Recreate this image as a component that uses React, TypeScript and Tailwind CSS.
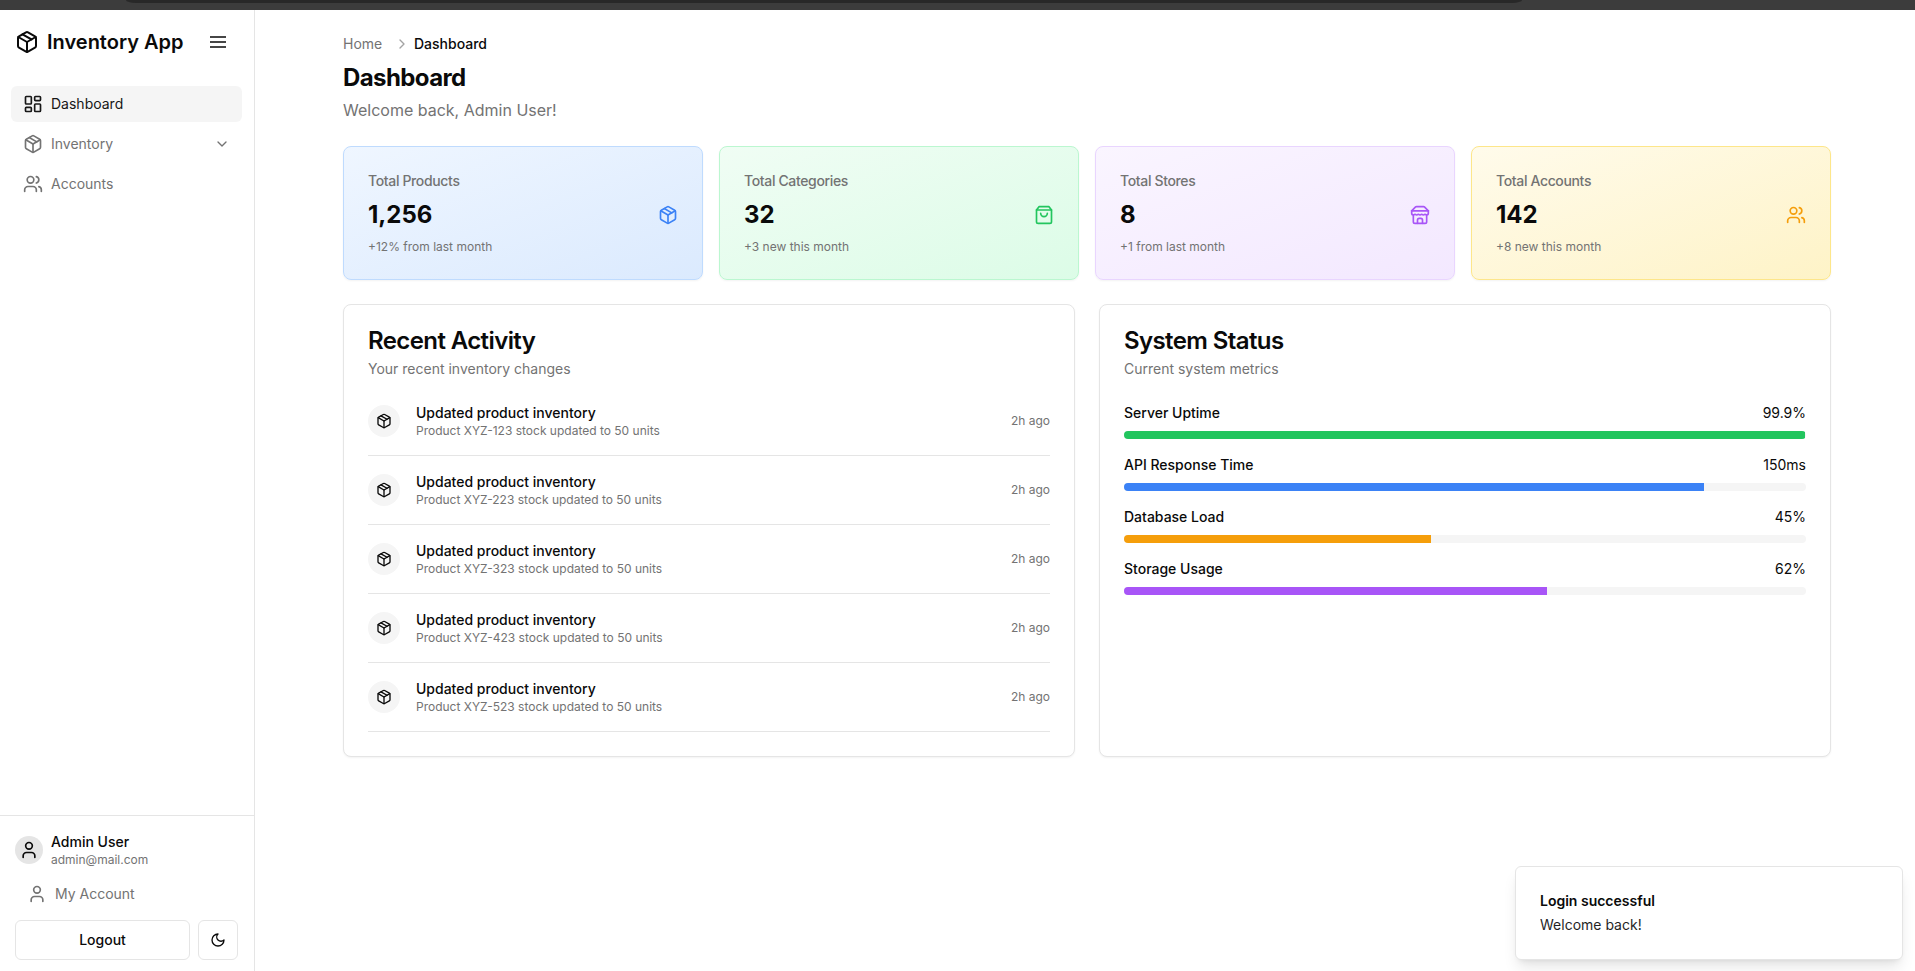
import type { ReactNode } from "react";
import { ChevronDown, ChevronRight, LayoutDashboard, Package, User, Users } from "lucide-react";

function Icon({ className, children }: { className?: string; children: ReactNode }) {
  return (
    <svg
      viewBox="0 0 24 24"
      fill="none"
      stroke="currentColor"
      strokeWidth="2"
      strokeLinecap="round"
      strokeLinejoin="round"
      className={className}
    >
      {children}
    </svg>
  );
}

const Menu = ({ className }: { className?: string }) => (
  <Icon className={className}>
    <path strokeLinecap="butt" d="M2.4 12h19.2M2.4 6h19.2M2.4 18h19.2" />
  </Icon>
);

const Moon = ({ className }: { className?: string }) => (
  <Icon className={className}>
    <path d="M12 3a6 6 0 0 0 9 9 9 9 0 1 1-9-9Z" />
  </Icon>
);

const ShoppingBag = ({ className }: { className?: string }) => (
  <Icon className={className}>
    <path d="M6 2 3 6v14a2 2 0 0 0 2 2h14a2 2 0 0 0 2-2V6l-3-4Z" />
    <path d="M3 6h18" />
    <path d="M16 10a4 4 0 0 1-8 0" />
  </Icon>
);

const Store = ({ className }: { className?: string }) => (
  <Icon className={className}>
    <path d="m2 7 4.41-4.41A2 2 0 0 1 7.83 2h8.34a2 2 0 0 1 1.42.59L22 7" />
    <path d="M4 12v8a2 2 0 0 0 2 2h12a2 2 0 0 0 2-2v-8" />
    <path d="M15 22v-4a2 2 0 0 0-2-2h-2a2 2 0 0 0-2 2v4" />
    <path d="M2 7h20" />
    <path d="M22 7v3a2 2 0 0 1-2 2a2.7 2.7 0 0 1-1.59-.63.7.7 0 0 0-.82 0A2.7 2.7 0 0 1 16 12a2.7 2.7 0 0 1-1.59-.63.7.7 0 0 0-.82 0A2.7 2.7 0 0 1 12 12a2.7 2.7 0 0 1-1.59-.63.7.7 0 0 0-.82 0A2.7 2.7 0 0 1 8 12a2.7 2.7 0 0 1-1.59-.63.7.7 0 0 0-.82 0A2.7 2.7 0 0 1 4 12a2 2 0 0 1-2-2V7" />
  </Icon>
);

const stats = [
  {
    label: "Total Products",
    value: "1,256",
    note: "+12% from last month",
    card: "border-[#bfdbfe] from-[#eff6ff] to-[#dbeafe]",
    icon: <Package className="size-5 text-[#3b82f6]" />,
  },
  {
    label: "Total Categories",
    value: "32",
    note: "+3 new this month",
    card: "border-[#bbf7d0] from-[#f0fdf4] to-[#dcfce7]",
    icon: <ShoppingBag className="size-5 text-[#22c55e]" />,
  },
  {
    label: "Total Stores",
    value: "8",
    note: "+1 from last month",
    card: "border-[#e9d5ff] from-[#faf5ff] to-[#f3e8ff]",
    icon: <Store className="size-5 text-[#a855f7]" />,
  },
  {
    label: "Total Accounts",
    value: "142",
    note: "+8 new this month",
    card: "border-[#fde68a] from-[#fffbeb] to-[#fef3c7]",
    icon: <Users className="size-5 text-[#f59e0b]" />,
  },
];

const activities = ["XYZ-123", "XYZ-223", "XYZ-323", "XYZ-423", "XYZ-523"];

const metrics = [
  { label: "Server Uptime", value: "99.9%", bar: "w-[99.9%] bg-[#22c55e]" },
  { label: "API Response Time", value: "150ms", bar: "w-[85%] bg-[#3b82f6]" },
  { label: "Database Load", value: "45%", bar: "w-[45%] bg-[#f59e0b]" },
  { label: "Storage Usage", value: "62%", bar: "w-[62%] bg-[#a855f7]" },
];

function Sidebar() {
  return (
    <aside className="flex w-[255px] shrink-0 flex-col border-r border-[#e5e5e5]">
      <div className="flex h-16 items-center justify-between pr-[26px] pl-[15px]">
        <div className="flex items-center gap-2">
          <Package className="size-6" />
          <span className="text-xl font-semibold">Inventory App</span>
        </div>
        <Menu className="size-5" />
      </div>
      <nav className="flex flex-1 flex-col gap-1 pt-3 pr-3 pl-[11px] text-sm text-[#737373]">
        <a className="flex h-9 items-center gap-2 rounded-md bg-[#f5f5f5] px-3 text-[#171717]">
          <LayoutDashboard className="size-5" />
          Dashboard
        </a>
        <a className="flex h-9 items-center gap-2 rounded-md px-3">
          <Package className="size-5" />
          <span className="flex-1">Inventory</span>
          <ChevronDown className="size-4" />
        </a>
        <a className="flex h-9 items-center gap-2 rounded-md px-3">
          <Users className="size-5" />
          Accounts
        </a>
      </nav>
      <div className="border-t border-[#e5e5e5] pt-4 pr-4 pb-[11px] pl-[15px]">
        <div className="flex items-center gap-2">
          <div className="flex size-7 items-center justify-center rounded-full bg-[#e5e5e5]">
            <User className="size-5" />
          </div>
          <div>
            <p className="text-sm font-medium">Admin User</p>
            <p className="text-xs text-[#737373]">admin@mail.com</p>
          </div>
        </div>
        <a className="mt-2 flex h-9 items-center gap-2 px-3 text-sm text-[#737373]">
          <User className="size-5" />
          My Account
        </a>
        <div className="mt-2 flex gap-2">
          <button className="h-10 flex-1 rounded-md border border-[#e5e5e5] text-sm font-medium">
            Logout
          </button>
          <button className="flex size-10 items-center justify-center rounded-md border border-[#e5e5e5]">
            <Moon className="size-4" />
          </button>
        </div>
      </div>
    </aside>
  );
}

function Panel({ title, subtitle, children }: { title: string; subtitle: string; children: ReactNode }) {
  return (
    <section className="rounded-lg border border-[#e5e5e5] bg-white p-6 shadow-[0_1px_2px_0_rgba(0,0,0,0.05)]">
      <h2 className="text-2xl leading-none font-semibold tracking-tight">{title}</h2>
      <p className="mt-1.5 mb-6 text-sm text-[#737373]">{subtitle}</p>
      <div className="flex flex-col gap-4">{children}</div>
    </section>
  );
}

export default function App() {
  return (
    <div className="relative flex h-[971px] w-[1915px] flex-col overflow-hidden bg-white font-['Inter',sans-serif] text-[#0a0a0a]">
      <div className="h-2.5 shrink-0 bg-[#3c3c3c] pl-[126px]">
        <div className="h-[3px] w-[1396px] rounded-b-[10px_3px] bg-[#282828]" />
      </div>
      <div className="flex min-h-0 flex-1">
        <Sidebar />
        <main className="flex-1 pt-6 pr-[84px] pl-[88px]">
          <div className="flex h-5 items-center text-sm">
            <span className="w-[51px] text-[#737373]">Home</span>
            <ChevronRight className="size-4 text-[#a3a3a3]" />
            <span className="ml-1 font-medium">Dashboard</span>
          </div>
          <h1 className="mt-2 text-2xl font-bold tracking-tight">Dashboard</h1>
          <p className="mt-1 text-[#737373]">Welcome back, Admin User!</p>
          <div className="mt-6 grid grid-cols-4 gap-4">
            {stats.map((s) => (
              <div
                key={s.label}
                className={`rounded-lg border bg-linear-to-br p-6 shadow-[0_1px_2px_0_rgba(0,0,0,0.05)] ${s.card}`}
              >
                <p className="text-sm font-medium tracking-tight text-[#737373]">{s.label}</p>
                <div className="mt-2 flex items-center justify-between">
                  <p className="text-2xl font-bold">{s.value}</p>
                  {s.icon}
                </div>
                <p className="mt-2 text-xs text-[#737373]">{s.note}</p>
              </div>
            ))}
          </div>
          <div className="mt-6 grid grid-cols-2 gap-6">
            <Panel title="Recent Activity" subtitle="Your recent inventory changes">
              {activities.map((code) => (
                <div key={code} className="flex items-center gap-4 border-b border-[#e5e5e5] pb-4">
                  <div className="flex size-8 items-center justify-center rounded-full bg-[#f5f5f5]">
                    <Package className="size-4" />
                  </div>
                  <div className="flex-1">
                    <p className="text-sm font-medium">Updated product inventory</p>
                    <p className="text-xs text-[#737373]">Product {code} stock updated to 50 units</p>
                  </div>
                  <span className="text-xs text-[#737373]">2h ago</span>
                </div>
              ))}
            </Panel>
            <Panel title="System Status" subtitle="Current system metrics">
              {metrics.map((m) => (
                <div key={m.label}>
                  <div className="flex justify-between text-sm">
                    <span className="font-medium">{m.label}</span>
                    <span>{m.value}</span>
                  </div>
                  <div className="mt-2 h-2 overflow-hidden rounded-full bg-[#f5f5f5]">
                    <div className={`h-full ${m.bar}`} />
                  </div>
                </div>
              ))}
            </Panel>
          </div>
        </main>
      </div>
      <div className="absolute right-3 bottom-[11px] w-[388px] rounded-md border border-[#e5e5e5] bg-white p-6 text-sm shadow-lg">
        <p className="font-semibold">Login successful</p>
        <p className="mt-1 opacity-90">Welcome back!</p>
      </div>
    </div>
  );
}
